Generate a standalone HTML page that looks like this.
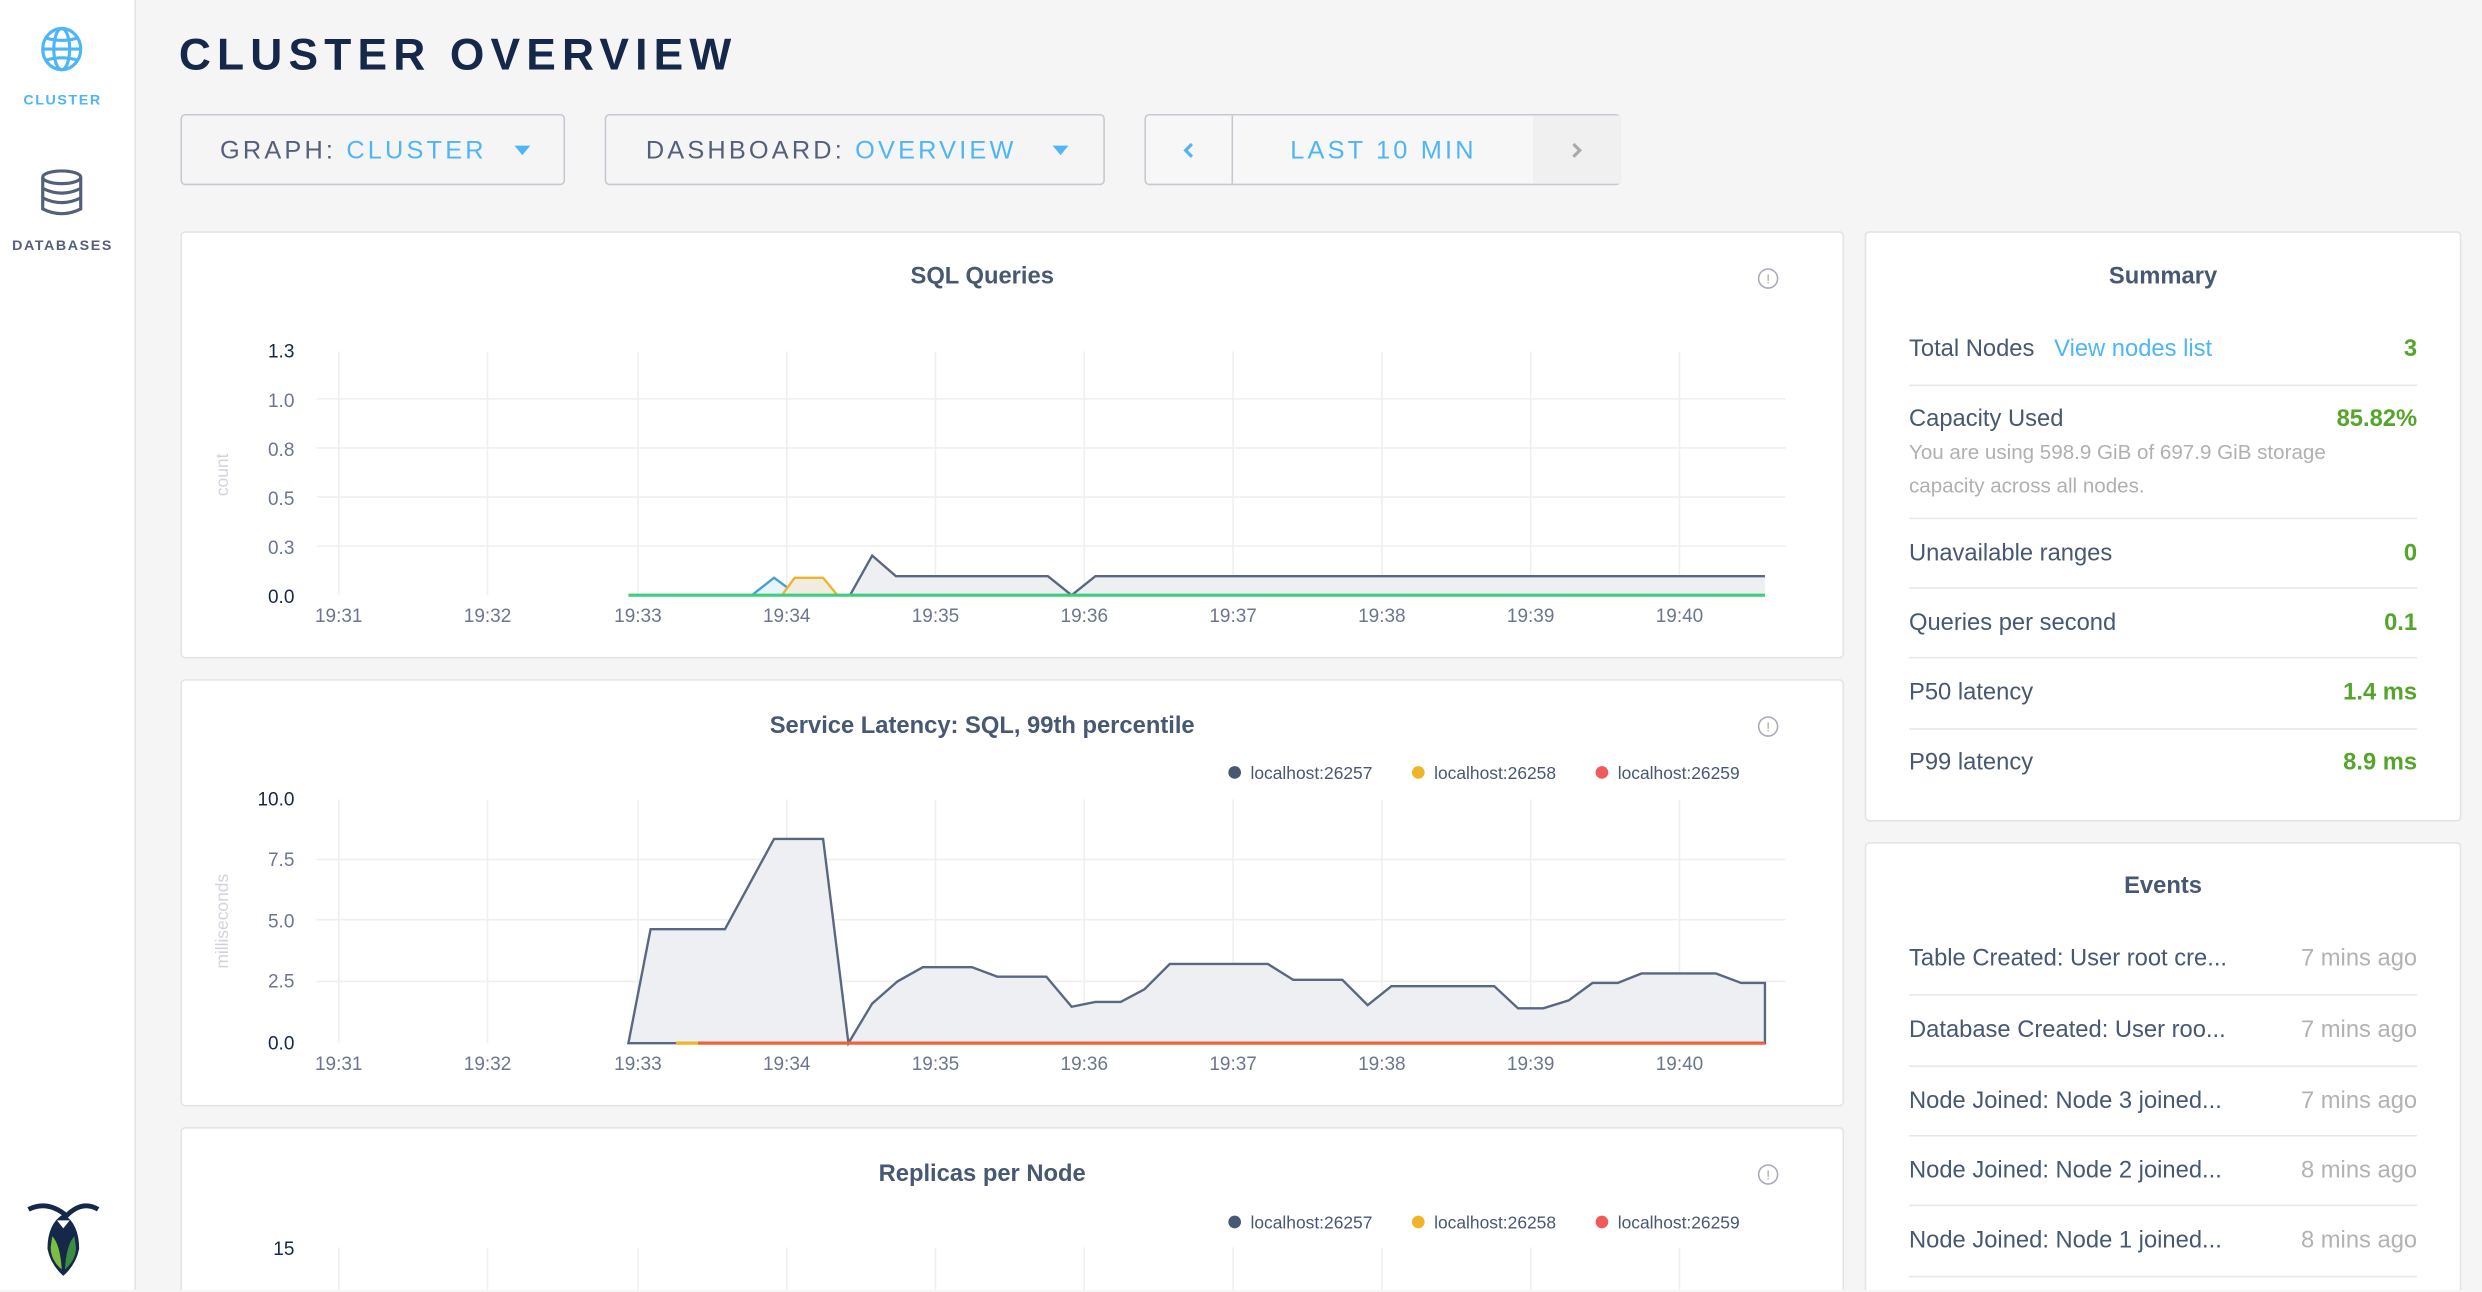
<!DOCTYPE html>
<html><head><meta charset="utf-8"><style>
html,body{margin:0;padding:0;width:2482px;height:1292px;overflow:hidden;background:#f5f5f5;font-family:"Liberation Sans",sans-serif}
#w{position:absolute;left:0;top:0;width:1568px;height:815px;overflow:hidden;transform:scale(1.58291);transform-origin:0 0;background:#f5f5f5}
.a{position:absolute}
.side{left:0;top:0;width:85px;height:815px;background:#fff;border-right:1px solid #e2e2e2}
.card{background:#fff;border:1px solid #e3e3e3;border-radius:3px;box-sizing:border-box}
.btn{border:1px solid #c6c9d2;border-radius:3px;box-sizing:border-box;height:45px;top:72px;font-size:16px;letter-spacing:2px;color:#54607a;line-height:45px}
.blue{color:#4eb5f7}
.ttl{font-size:15px;font-weight:bold;color:#475872;text-align:center;width:100%}
.row{left:1206px;width:321px;font-size:15px;color:#475872}
.row .r{position:absolute;right:0;top:0;color:#55a52b;font-weight:bold}
.hr{left:1206px;width:321px;height:1px;background:#e8e8e8}
.ev .r{color:#b2b2b2;font-weight:normal}
svg text{font-family:"Liberation Sans",sans-serif}
</style></head><body><div id="w">
<div class="a side"></div>
<svg class="a" style="left:24px;top:16px" width="30" height="32" viewBox="0 0 30 32"><g fill="none" stroke="#4eb5f7" stroke-width="2"><ellipse cx="15" cy="15" rx="12" ry="13"/><ellipse cx="15" cy="15" rx="5" ry="13"/><path d="M3 15h24M5 8q10 3 20 0M5 22q10-3 20 0"/></g></svg>
<div class="a" style="left:0;top:58px;width:79px;text-align:center;font-size:9px;font-weight:bold;letter-spacing:1px;color:#4eb5f7">CLUSTER</div>
<svg class="a" style="left:25px;top:107px" width="30" height="30" viewBox="0 0 30 30"><g fill="none" stroke="#54607a" stroke-width="2"><ellipse cx="14" cy="5" rx="12" ry="4"/><path d="M2 5v20q12 6 24 0V5M2 12q12 6 24 0M2 18q12 6 24 0"/></g></svg>
<div class="a" style="left:0;top:150px;width:79px;text-align:center;font-size:9px;font-weight:bold;letter-spacing:1px;color:#54607a">DATABASES</div>
<svg class="a" style="left:16px;top:757px" width="48" height="50" viewBox="0 0 48 50"><path d="M2 7q12-6 24 4q10-10 20-4" fill="none" stroke="#152849" stroke-width="3"/><path d="M24 10q10 6 10 22q-2 10-10 17q-8-7-10-17q0-16 10-22z" fill="#152849"/><path d="M20 14h8l-4 5z" fill="#fff"/><path d="M17 24q5 5 6 21q-7-6-7-14z" fill="#7cbf3f"/><path d="M31 24q-5 5-6 21q7-6 7-14z" fill="#3b8e3f"/></svg>

<div class="a" style="left:113px;top:19px;font-size:28px;font-weight:bold;letter-spacing:3.9px;color:#152849">CLUSTER OVERVIEW</div>
<div class="a btn" style="left:114px;width:243px;padding-left:24px">GRAPH: <span class="blue">CLUSTER</span><span class="a" style="left:210px;top:19px;border:5px solid transparent;border-top:6px solid #4eb5f7;border-bottom:0"></span></div>
<div class="a btn" style="left:382px;width:316px;padding-left:25px">DASHBOARD: <span class="blue">OVERVIEW</span><span class="a" style="left:282px;top:19px;border:5px solid transparent;border-top:6px solid #4eb5f7;border-bottom:0"></span></div>
<div class="a btn" style="left:723px;width:301px;background:#f7f7f7">
<div class="a" style="left:54px;top:0;width:190px;height:43px;border-left:1px solid #c6c9d2;border-right:1px solid #c6c9d2;text-align:center;line-height:45px" ><span class="blue">LAST 10 MIN</span></div>
<div class="a" style="left:245px;top:0;width:55px;height:43px;background:#f0f0f0"></div>
<svg class="a" style="left:23px;top:17px" width="8" height="10"><path d="M6 1L2 5L6 9" fill="none" stroke="#4eb5f7" stroke-width="2"/></svg>
<svg class="a" style="left:268px;top:17px" width="8" height="10"><path d="M2 1L6 5L2 9" fill="none" stroke="#aaa" stroke-width="2"/></svg></div>

<div class="a card" style="left:114px;top:146px;width:1051px;height:270px"></div>
<div class="a card" style="left:114px;top:429px;width:1051px;height:270px"></div>
<div class="a card" style="left:114px;top:712px;width:1051px;height:103px;border-bottom:none;border-radius:3px 3px 0 0"></div>
<div class="a card" style="left:1178px;top:146px;width:377px;height:373px"></div>
<div class="a card" style="left:1178px;top:532px;width:377px;height:283px;border-bottom:none;border-radius:3px 3px 0 0"></div>

<div class="a ttl" style="left:114px;width:1013px;top:166px">SQL Queries</div>
<div class="a ttl" style="left:114px;width:1013px;top:450px">Service Latency: SQL, 99th percentile</div>
<div class="a ttl" style="left:114px;width:1013px;top:733px">Replicas per Node</div>

<svg class="a" style="left:0;top:0" width="1568" height="815">
<g fill="none" stroke="#aab" stroke-width="1"><circle cx="1117" cy="176" r="6"/><circle cx="1117" cy="459" r="6"/><circle cx="1117" cy="742" r="6"/></g>
<g fill="#99a" font-size="8" text-anchor="middle"><text x="1117" y="179">!</text><text x="1117" y="462">!</text><text x="1117" y="745">!</text></g>
<g stroke="#efefef" stroke-width="1">
<path d="M200 252H1128M200 283H1128M200 314H1128M200 345H1128"/>
<path d="M214 222V376M308 222V376M403 222V376M497 222V376M591 222V376M685 222V376M779 222V376M873 222V376M967 222V376M1061 222V376"/>
<path d="M200 543H1128M200 581H1128M200 620H1128"/>
<path d="M214 505V659M308 505V659M403 505V659M497 505V659M591 505V659M685 505V659M779 505V659M873 505V659M967 505V659M1061 505V659"/>
<path d="M214 788V815M308 788V815M403 788V815M497 788V815M591 788V815M685 788V815M779 788V815M873 788V815M967 788V815M1061 788V815"/>
</g>
<g font-size="12" fill="#6b7690" text-anchor="end">
<text x="186" y="226" fill="#152849">1.3</text><text x="186" y="257">1.0</text><text x="186" y="288">0.8</text><text x="186" y="319">0.5</text><text x="186" y="350">0.3</text><text x="186" y="381" fill="#152849">0.0</text>
<text x="186" y="509" fill="#152849">10.0</text><text x="186" y="547">7.5</text><text x="186" y="586">5.0</text><text x="186" y="624">2.5</text><text x="186" y="663" fill="#152849">0.0</text>
<text x="186" y="793" fill="#152849">15</text>
</g>
<g font-size="12" fill="#6b7690" text-anchor="middle">
<text x="214" y="393">19:31</text><text x="308" y="393">19:32</text><text x="403" y="393">19:33</text><text x="497" y="393">19:34</text><text x="591" y="393">19:35</text><text x="685" y="393">19:36</text><text x="779" y="393">19:37</text><text x="873" y="393">19:38</text><text x="967" y="393">19:39</text><text x="1061" y="393">19:40</text>
<text x="214" y="676">19:31</text><text x="308" y="676">19:32</text><text x="403" y="676">19:33</text><text x="497" y="676">19:34</text><text x="591" y="676">19:35</text><text x="685" y="676">19:36</text><text x="779" y="676">19:37</text><text x="873" y="676">19:38</text><text x="967" y="676">19:39</text><text x="1061" y="676">19:40</text>
</g>
<text transform="translate(144 300) rotate(-90)" font-size="11" fill="#d0d3da" text-anchor="middle">count</text>
<text transform="translate(144 582) rotate(-90)" font-size="11" fill="#d0d3da" text-anchor="middle">milliseconds</text>
<path d="M475 376L489 365L504 376Z" fill="#e8f3fa" stroke="#4a9fd5" stroke-width="1.5"/>
<path d="M494 376L502 365L520 365L529 376Z" fill="#f1ece0" stroke="#f0b429" stroke-width="1.5"/>
<path d="M537 376L551 351L566 364L662 364L677 376L692 364L1115 364L1115 376Z" fill="#eeeff3"/>
<path d="M537 376L551 351L566 364L662 364L677 376L692 364L1115 364" fill="none" stroke="#5a6782" stroke-width="1.5"/>
<path d="M397 376H1115" stroke="#3ecf7e" stroke-width="2"/>
<path d="M397 659L411 587L458 587L489 530L520 530L536 659L551 634L567 620L583 611L614 611L630 617L661 617L677 636L692 633L708 633L723 625L739 609L801 609L817 619L848 619L864 635L879 623L944 623L959 637L975 637L991 632L1006 621L1022 621L1037 615L1084 615L1100 621L1115 621L1115 659Z" fill="#eeeff3" stroke="#5a6782" stroke-width="1.5"/>
<path d="M427 659H441" stroke="#f0b429" stroke-width="2"/>
<path d="M441 659H1115" stroke="#f0623a" stroke-width="2"/>
<g font-size="11" fill="#475872">
<circle cx="780" cy="488" r="4" fill="#475872"/><text x="790" y="492">localhost:26257</text>
<circle cx="896" cy="488" r="4" fill="#f0b429"/><text x="906" y="492">localhost:26258</text>
<circle cx="1012" cy="488" r="4" fill="#f05a5a"/><text x="1022" y="492">localhost:26259</text>
<circle cx="780" cy="772" r="4" fill="#475872"/><text x="790" y="776">localhost:26257</text>
<circle cx="896" cy="772" r="4" fill="#f0b429"/><text x="906" y="776">localhost:26258</text>
<circle cx="1012" cy="772" r="4" fill="#f05a5a"/><text x="1022" y="776">localhost:26259</text>
</g>
</svg>

<div class="a ttl" style="left:1178px;width:377px;top:166px">Summary</div>
<div class="a row" style="top:212px">Total Nodes &nbsp; <span class="blue">View nodes list</span><span class="r">3</span></div>
<div class="a hr" style="top:243px"></div>
<div class="a row" style="top:256px">Capacity Used<span class="r">85.82%</span><div style="font-size:13px;color:#b0b0b0;line-height:21px;margin-top:2px">You are using 598.9 GiB of 697.9 GiB storage<br>capacity across all nodes.</div></div>
<div class="a hr" style="top:327px"></div>
<div class="a row" style="top:341px">Unavailable ranges<span class="r">0</span></div>
<div class="a hr" style="top:371px"></div>
<div class="a row" style="top:385px">Queries per second<span class="r">0.1</span></div>
<div class="a hr" style="top:415px"></div>
<div class="a row" style="top:429px">P50 latency<span class="r">1.4 ms</span></div>
<div class="a hr" style="top:460px"></div>
<div class="a row" style="top:473px">P99 latency<span class="r">8.9 ms</span></div>

<div class="a ttl" style="left:1178px;width:377px;top:551px">Events</div>
<div class="a row ev" style="top:597px">Table Created: User root cre...<span class="r">7 mins ago</span></div>
<div class="a hr" style="top:628px"></div>
<div class="a row ev" style="top:642px">Database Created: User roo...<span class="r">7 mins ago</span></div>
<div class="a hr" style="top:673px"></div>
<div class="a row ev" style="top:687px">Node Joined: Node 3 joined...<span class="r">7 mins ago</span></div>
<div class="a hr" style="top:717px"></div>
<div class="a row ev" style="top:731px">Node Joined: Node 2 joined...<span class="r">8 mins ago</span></div>
<div class="a hr" style="top:761px"></div>
<div class="a row ev" style="top:775px">Node Joined: Node 1 joined...<span class="r">8 mins ago</span></div>
<div class="a hr" style="top:806px"></div>
</div></body></html>
